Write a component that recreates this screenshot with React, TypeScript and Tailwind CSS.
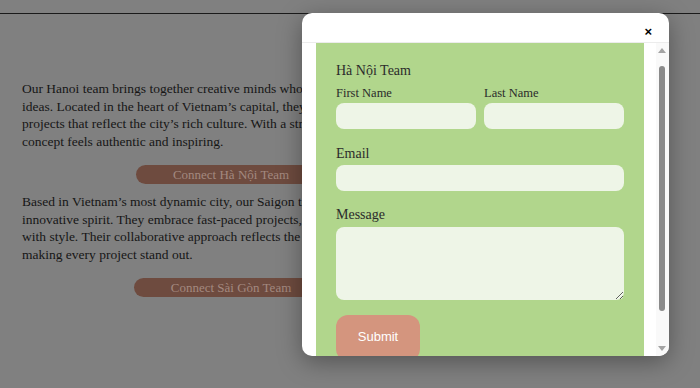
import React from 'react';

const serif = "font-['Liberation_Serif','DejaVu_Serif',serif]";

function PageBehind() {
  return (
    <div className={`flex h-full flex-col ${serif}`}>
      <div className="h-[14px] border-b-[1.5px] border-[#1a1a1a]" />
      <section className="w-[440px] pl-[22px] pt-[66px] text-[13.5px] leading-[17.7px] text-[#161616]">
        <p>
          Our Hanoi team brings together creative minds who transform bold
          <br />
          ideas. Located in the heart of Vietnam’s capital, they are known for
          <br />
          projects that reflect the city’s rich culture. With a strong eye, each
          <br />
          concept feels authentic and inspiring.
        </p>
        <div className="mt-[14px] flex justify-center">
          <button
            type="button"
            className="h-[19px] rounded-full bg-[#6e4b3f] px-[37px] text-[13px] leading-[19px] text-[#a3897f]"
          >
            Connect Hà Nội Team
          </button>
        </div>
        <p className="mt-[9px]">
          Based in Vietnam’s most dynamic city, our Saigon team thrives on an
          <br />
          innovative spirit. They embrace fast-paced projects, turning ideas
          <br />
          with style. Their collaborative approach reflects the city’s energy,
          <br />
          making every project stand out.
        </p>
        <div className="mt-[14px] flex justify-center">
          <button
            type="button"
            className="h-[19px] rounded-full bg-[#6e4b3f] px-[37px] text-[13px] leading-[19px] text-[#a3897f]"
          >
            Connect Sài Gòn Team
          </button>
        </div>
      </section>
    </div>
  );
}

function Field({ label, className = '' }: { label: string; className?: string }) {
  return (
    <label className={`flex flex-col ${className}`}>
      <span className="mb-[3px] text-[12.5px] leading-[14px] text-[#2b2b2b]">{label}</span>
      <input type="text" className="h-[26px] rounded-[8px] bg-[#eef5e7] px-2 outline-none" />
    </label>
  );
}

function Scrollbar() {
  return (
    <div className="flex w-[13px] flex-col items-center bg-[#f9f9f9] pr-[2px]">
      <svg width="8" height="5" viewBox="0 0 8 5" className="mt-[5px]">
        <path d="M0 5 L4 0 L8 5 Z" fill="#a3a3a3" />
      </svg>
      <div className="mt-[13px] h-[245px] w-[6px] rounded-full bg-[#8a8a8a]" />
      <div className="flex-1" />
      <svg width="8" height="5" viewBox="0 0 8 5" className="mb-[5px]">
        <path d="M0 0 L8 0 L4 5 Z" fill="#a3a3a3" />
      </svg>
    </div>
  );
}

function ContactModal() {
  return (
    <div className="absolute left-[302px] top-[13px] flex h-[343px] w-[367px] flex-col overflow-hidden rounded-[10px] bg-white shadow-[0_6px_24px_rgba(0,0,0,0.35)]">
      <div className="flex h-[30px] shrink-0 items-end justify-end border-b border-[#ececec] pb-[4px] pr-[17px]">
        <button type="button" className="font-['Liberation_Sans',sans-serif] text-[13px] font-bold leading-none text-black" aria-label="Close">
          ×
        </button>
      </div>
      <div className="flex min-h-0 flex-1">
        <div className="w-[14px]" />
        <div className={`w-[328px] overflow-hidden bg-[#b1d68c] px-5 pt-[19px] ${serif}`}>
          <h3 className="text-[14px] leading-[18px] text-[#2b2b2b]">Hà Nội Team</h3>
          <div className="mt-[6px] grid grid-cols-2 gap-2">
            <Field label="First Name" />
            <Field label="Last Name" />
          </div>
          <label className="mt-[17px] flex flex-col">
            <span className="mb-[3px] text-[14px] leading-[16px] text-[#2b2b2b]">Email</span>
            <input type="email" className="h-[26px] rounded-[8px] bg-[#eef5e7] px-2 outline-none" />
          </label>
          <label className="mt-[16px] flex flex-col">
            <span className="mb-[4px] text-[14px] leading-[16px] text-[#2b2b2b]">Message</span>
            <textarea className="h-[73px] rounded-[8px] bg-[#eef5e7] px-2 outline-none" />
          </label>
          <button
            type="button"
            className="mt-[15px] h-[46px] w-[84px] rounded-[12px] bg-[#d4957e] pb-[2px] font-['Liberation_Sans',Arial,sans-serif] text-[13px] text-white"
          >
            Submit
          </button>
        </div>
        <div className="w-[12px]" />
        <Scrollbar />
      </div>
    </div>
  );
}

export default function App() {
  return (
    <div className="relative h-[388px] w-[700px] overflow-hidden bg-[#808080]">
      <PageBehind />
      <ContactModal />
    </div>
  );
}
